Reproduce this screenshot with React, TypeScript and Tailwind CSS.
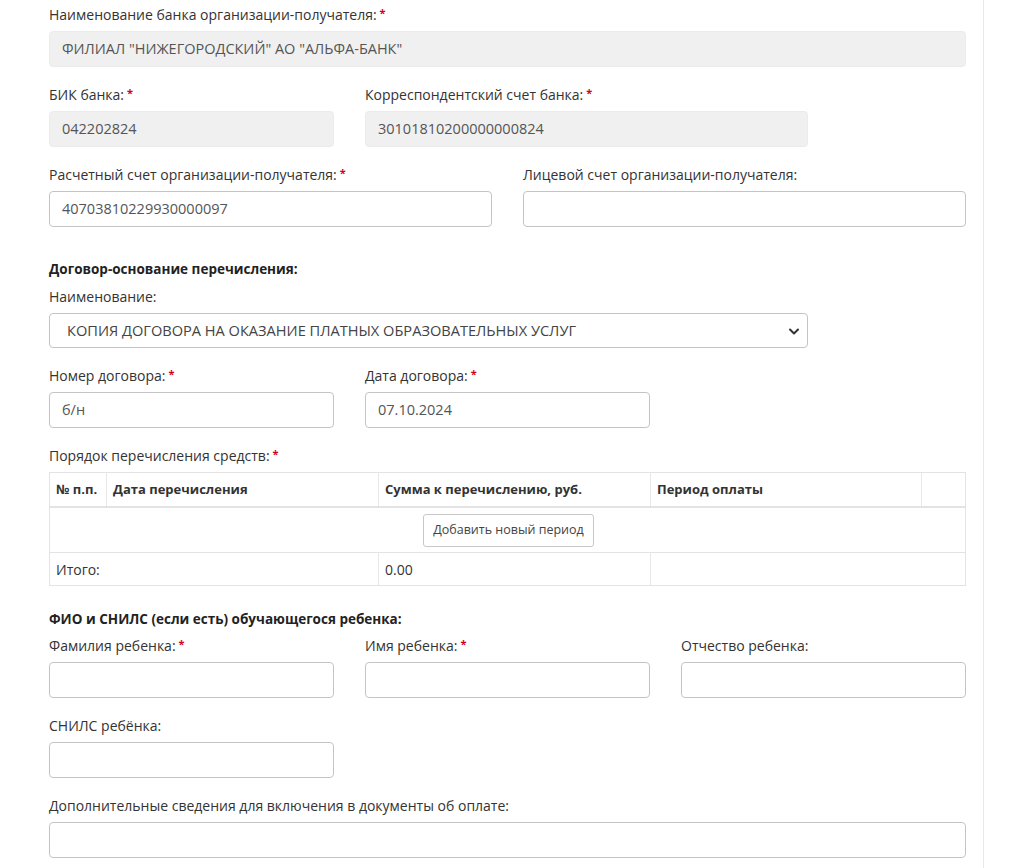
import React from "react";

const font = { fontFamily: '"Open Sans", "Noto Sans", sans-serif' };

function Star() {
  return <span className="ml-[3px] text-[11px] relative -top-[3px] text-[#d0021b] font-bold">*</span>;
}

function Label({ text, req }: { text: string; req?: boolean }) {
  return (
    <div className="h-[20px] leading-[20px] text-[14px] text-[#333] mb-[6px] whitespace-nowrap">
      {text}
      {req && <Star />}
    </div>
  );
}

function Input({ value, disabled }: { value?: string; disabled?: boolean }) {
  return (
    <div
      className={
        "h-[36px] rounded-[4px] border pl-[12px] pr-[12px] flex items-center text-[14.5px] text-[#555] whitespace-nowrap " +
        (disabled ? "bg-[#f0f0f0] border-[#ebebeb]" : "bg-white border-[#c4c4c4]")
      }
    >
      {value}
    </div>
  );
}

function Field({ label, req, value, disabled, className }: { label: string; req?: boolean; value?: string; disabled?: boolean; className?: string }) {
  return (
    <div className={className}>
      <Label text={label} req={req} />
      <Input value={value} disabled={disabled} />
    </div>
  );
}

export default function App() {
  return (
    <div className="bg-white w-[1022px] h-[868px] overflow-hidden flex" style={font}>
      <div className="w-[984px] border-r border-[#e8e8e8] pl-[49px] pr-[17px] pt-[5px]">
        <div className="w-[917px]">
          <Field label="Наименование банка организации-получателя:" req value={'ФИЛИАЛ "НИЖЕГОРОДСКИЙ" АО "АЛЬФА-БАНК"'} disabled />
          <div className="flex gap-[31px] mt-[18px]">
            <Field className="w-[285px]" label="БИК банка:" req value="042202824" disabled />
            <Field className="w-[443px]" label="Корреспондентский счет банка:" req value="30101810200000000824" disabled />
          </div>
          <div className="flex gap-[31px] mt-[18px]">
            <Field className="w-[443px]" label="Расчетный счет организации-получателя:" req value="40703810229930000097" />
            <Field className="w-[443px]" label="Лицевой счет организации-получателя:" />
          </div>
          <div className="mt-[32px] h-[20px] leading-[20px] text-[13.5px] font-bold text-[#222]">Договор-основание перечисления:</div>
          <div className="mt-[8px]">
            <Label text="Наименование:" />
            <div className="w-[759px] h-[35px] rounded-[4px] border border-[#c4c4c4] pl-[17px] pr-[6px] flex items-center justify-between text-[14.6px] text-[#444]">
              <span className="whitespace-nowrap">КОПИЯ ДОГОВОРА НА ОКАЗАНИЕ ПЛАТНЫХ ОБРАЗОВАТЕЛЬНЫХ УСЛУГ</span>
              <svg width="14" height="14" viewBox="0 0 14 14">
                <path d="M3 5.5 L7 9.5 L11 5.5" fill="none" stroke="#333" strokeWidth="2" strokeLinecap="round" strokeLinejoin="round" />
              </svg>
            </div>
          </div>
          <div className="flex gap-[31px] mt-[18px]">
            <Field className="w-[285px]" label="Номер договора:" req value="б/н" />
            <Field className="w-[285px]" label="Дата договора:" req value="07.10.2024" />
          </div>
          <div className="mt-[18px]">
            <Label text="Порядок перечисления средств:" req />
            <div className="border border-[#e3e3e3] text-[14px] text-[#333]">
              <div className="flex h-[35px] border-b-2 border-[#e3e3e3] font-bold text-[13px]">
                <div className="w-[57px] pl-[6px] flex items-center border-r border-[#e8e8e8]">№ п.п.</div>
                <div className="w-[272px] pl-[6px] flex items-center border-r border-[#e8e8e8]">Дата перечисления</div>
                <div className="w-[272px] pl-[6px] flex items-center border-r border-[#e8e8e8]">Сумма к перечислению, руб.</div>
                <div className="w-[271px] pl-[6px] flex items-center border-r border-[#e8e8e8]">Период оплаты</div>
                <div className="flex-1"></div>
              </div>
              <div className="h-[45px] flex items-center justify-center border-b border-[#e3e3e3]">
                <div className="h-[33px] px-[9px] flex items-center rounded-[3px] border border-[#c8c8c8] text-[12.5px] text-[#444] ml-[2px] whitespace-nowrap">
                  Добавить новый период
                </div>
              </div>
              <div className="flex h-[32px]">
                <div className="w-[329px] pl-[6px] flex items-center border-r border-[#e8e8e8]">Итого:</div>
                <div className="w-[272px] pl-[6px] flex items-center border-r border-[#e8e8e8]">0.00</div>
                <div className="flex-1"></div>
              </div>
            </div>
          </div>
          <div className="mt-[23px] h-[20px] leading-[20px] text-[13.5px] font-bold text-[#222]">ФИО и СНИЛС (если есть) обучающегося ребенка:</div>
          <div className="flex gap-[31px] mt-[7px]">
            <Field className="w-[285px]" label="Фамилия ребенка:" req />
            <Field className="w-[285px]" label="Имя ребенка:" req />
            <Field className="w-[285px]" label="Отчество ребенка:" />
          </div>
          <div className="mt-[18px]">
            <Field className="w-[285px]" label="СНИЛС ребёнка:" />
          </div>
          <div className="mt-[18px]">
            <Field label="Дополнительные сведения для включения в документы об оплате:" />
          </div>
        </div>
      </div>
    </div>
  );
}
